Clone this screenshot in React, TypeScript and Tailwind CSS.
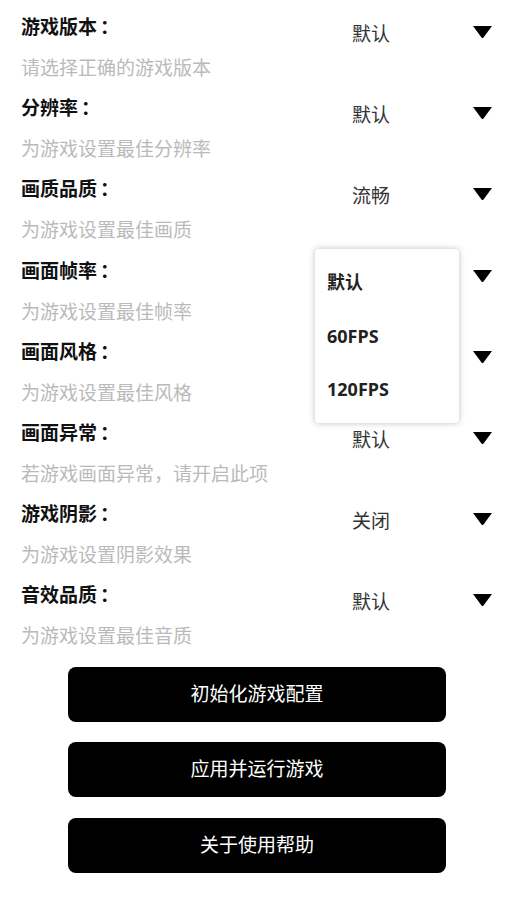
import React from "react";

const rows = [
  { title: "游戏版本", desc: "请选择正确的游戏版本", value: "默认" },
  { title: "分辨率", desc: "为游戏设置最佳分辨率", value: "默认" },
  { title: "画质品质", desc: "为游戏设置最佳画质", value: "流畅" },
  { title: "画面帧率", desc: "为游戏设置最佳帧率", value: "60FPS" },
  { title: "画面风格", desc: "为游戏设置最佳风格", value: "默认" },
  { title: "画面异常", desc: "若游戏画面异常，请开启此项", value: "默认" },
  { title: "游戏阴影", desc: "为游戏设置阴影效果", value: "关闭" },
  { title: "音效品质", desc: "为游戏设置最佳音质", value: "默认" },
];

const Arrow = () => (
  <svg width="21" height="14" viewBox="0 0 21 14" className="block">
    <path d="M1 1 L20 1 L11.5 12.5 Q10.5 13.6 9.5 12.5 Z" fill="#000" />
  </svg>
);

const App = () => {
  return (
    <div
      className="relative w-full min-h-screen bg-white px-[21px] pt-[12px]"
      style={{ fontFamily: '"Noto Sans", "Noto Sans CJK SC", sans-serif' }}
    >
      {rows.map((r) => (
        <div key={r.title} className="flex flex-row h-[81.2px]">
          <div className="flex-1 flex flex-col">
            <div className="h-[30px] leading-[30px] text-[19px] font-bold text-[#111]">
              {r.title}
              <span className="ml-[3px]">：</span>
            </div>
            <div className="mt-[11px] h-[30px] leading-[30px] text-[19px] text-[#bababa]">
              {r.desc}
            </div>
          </div>
          <div className="w-[141px] h-[30px] mt-[7px] flex flex-row items-center justify-between">
            <span className="text-[19px] text-[#333]">{r.value}</span>
            <div className="-mt-[4px]">
              <Arrow />
            </div>
          </div>
        </div>
      ))}

      <div className="flex flex-col items-center gap-[20.5px] mt-[5px] pb-10">
        {["初始化游戏配置", "应用并运行游戏", "关于使用帮助"].map((t) => (
          <button
            key={t}
            className="w-[378px] h-[55px] rounded-lg bg-black text-white text-[19px]"
          >
            {t}
          </button>
        ))}
      </div>

      {/* open frame-rate menu */}
      <div className="absolute left-[315px] top-[249px] w-[144px] h-[174px] bg-white rounded-[4px] shadow-[0_0_6px_rgba(0,0,0,0.25)] py-[7px]">
        {["默认", "60FPS", "120FPS"].map((o) => (
          <div
            key={o}
            className="h-[53.5px] flex items-center pl-[12px] text-[18px] font-bold text-[#222]"
          >
            {o}
          </div>
        ))}
      </div>
    </div>
  );
};

export default App;
